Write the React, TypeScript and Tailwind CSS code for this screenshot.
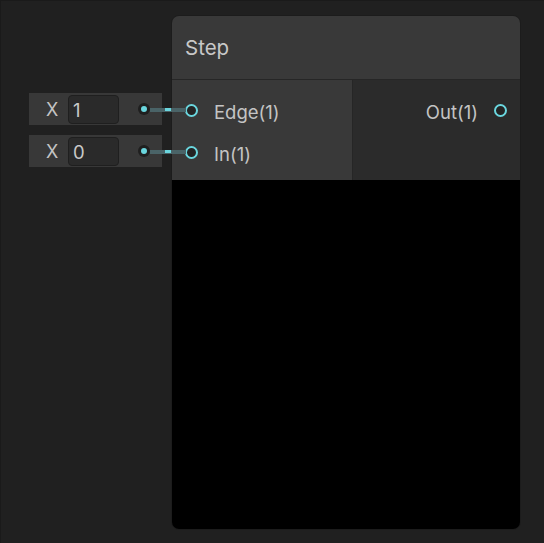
import React from "react";

const font = { fontFamily: "Inter, 'Noto Sans', sans-serif" };

function ValueBox({ value }: { value: string }) {
  return (
    <div className="h-[32px] w-[133px] bg-[#383838] flex items-center">
      <span className="ml-[17px] w-[12px] text-[18px] text-[#c4c4c4] leading-none pt-[1px]">X</span>
      <div className="ml-[10px] w-[51px] h-[29px] rounded-[4px] bg-[#2a2a2a] border border-[#1f1f1f] flex items-center pl-[4px] pt-[2px] text-[18.5px] text-[#c8c8c8] leading-none">
        {value}
      </div>
      <div className="ml-[19px] w-[12px] h-[12px] rounded-full bg-[#1f1f1f] flex items-center justify-center">
        <div className="w-[6px] h-[6px] rounded-full bg-[#6ad6de]" />
      </div>
    </div>
  );
}

function Port({ label, right }: { label: string; right?: boolean }) {
  const circle = (
    <div className="w-[13px] h-[13px] rounded-full border-2 border-[#6ad6de] bg-[#242424] shrink-0" />
  );
  return (
    <div className={`h-[24px] flex items-center gap-[16px] ${right ? "justify-end" : ""}`}>
      {right ? null : circle}
      <span className="text-[18.5px] text-[#c4c4c4] leading-none pt-[4px]">{label}</span>
      {right ? circle : null}
    </div>
  );
}

function Wire({ top }: { top: number }) {
  return (
    <>
      <div className="absolute left-[149px] h-[4px] w-[36px] bg-[#4a6367]" style={{ top }} />
      <div className="absolute left-[164px] h-[3px] w-[6px] bg-[#6ad6de]" style={{ top: top }} />
    </>
  );
}

export default function App() {
  return (
    <div
      className="relative w-[544px] h-[543px] bg-[#202020] border-t border-l border-[#1a1a1a] flex items-start pt-[14px] pl-[28px] overflow-hidden"
      style={font}
    >
      <div className="mt-[78px] flex flex-col gap-[10px]">
        <ValueBox value="1" />
        <ValueBox value="0" />
      </div>
      <div className="ml-[9px] w-[350px] h-[515px] rounded-[8px] overflow-hidden border border-[#1c1c1c] flex flex-col">
        <div className="h-[64px] shrink-0 bg-[#393939] border-b border-[#262626] flex items-center pl-[13px] pt-[1px]">
          <span className="text-[20.5px] text-[#c8c8c8] leading-none">Step</span>
        </div>
        <div className="h-[100px] shrink-0 flex">
          <div className="w-[181px] bg-[#393939] border-r border-[#262626] pt-[18px] pl-[13px] flex flex-col gap-[18px]">
            <Port label="Edge(1)" />
            <Port label="In(1)" />
          </div>
          <div className="flex-1 bg-[#2b2b2b] pt-[18px] pr-[13px]">
            <Port label="Out(1)" right />
          </div>
        </div>
        <div className="flex-1 bg-black" />
      </div>
      <Wire top={107} />
      <Wire top={149} />
    </div>
  );
}
